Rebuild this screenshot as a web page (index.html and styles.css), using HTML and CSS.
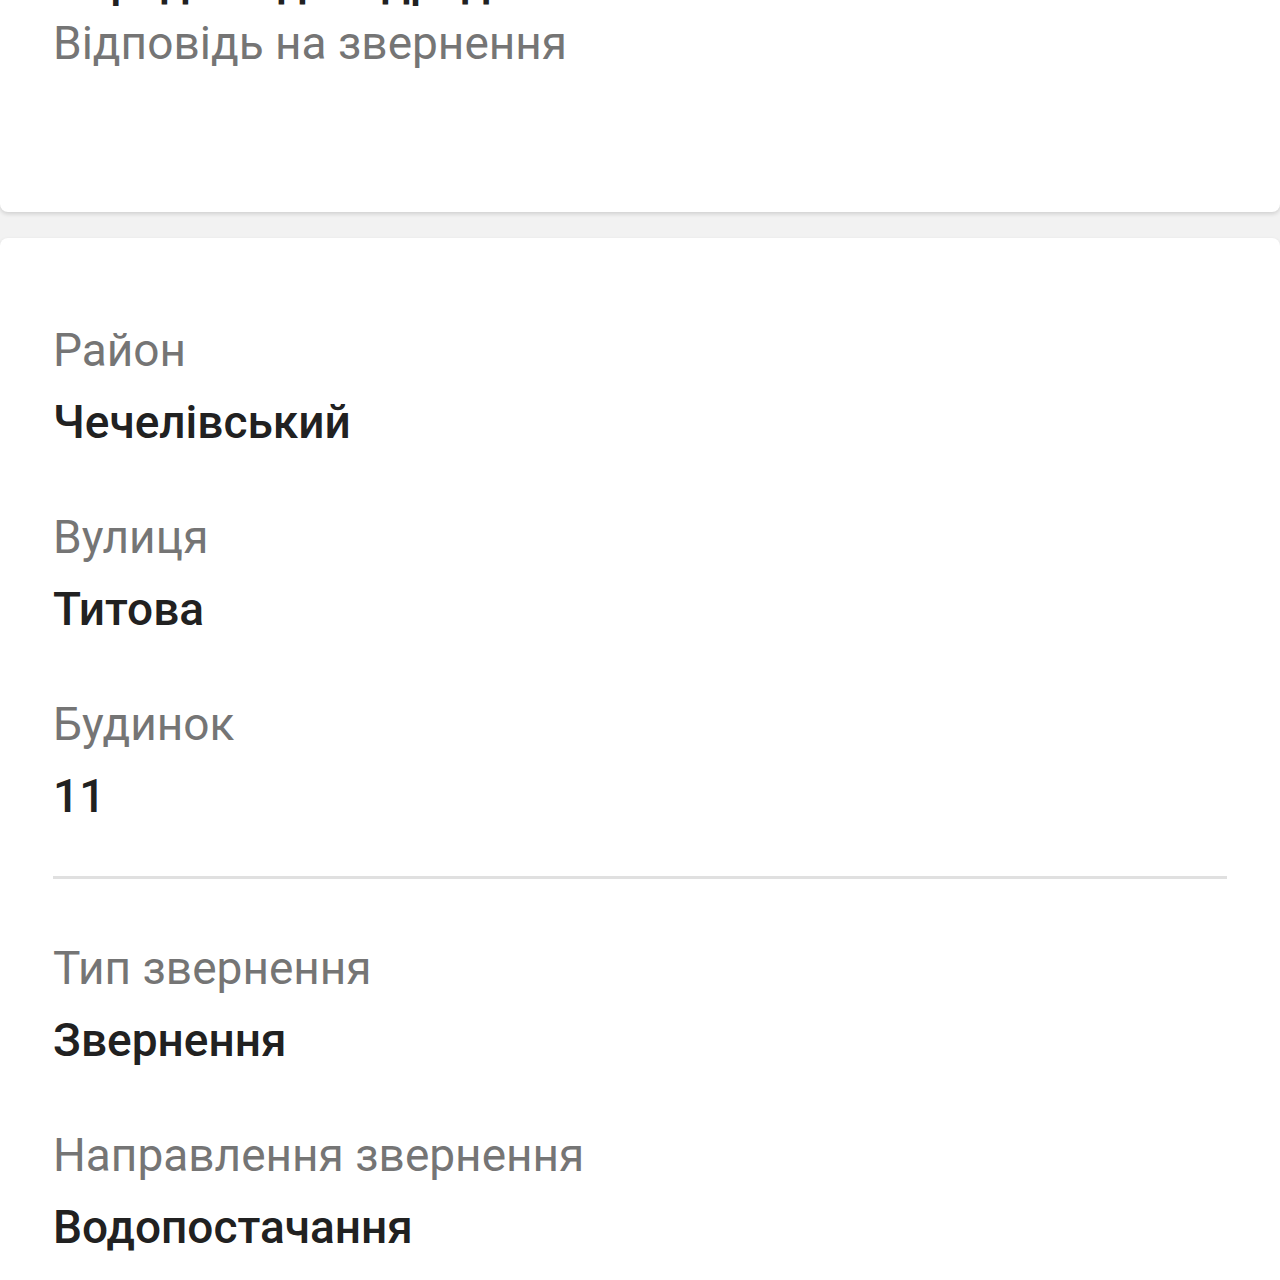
FILE: index.html
```html
<!DOCTYPE html>
<html lang="uk">
<head>
    <meta charset="UTF-8">
    <meta name="viewport" content="width=device-width, initial-scale=1.0">
    <title>Звернення</title>
    <link rel="stylesheet" href="styles.css">
</head>
<body>
    <div class="card card-head">
        <div class="head-title">Передано до підрядника</div>
        <div class="head-sub">Відповідь на звернення</div>
    </div>

    <div class="card card-info">
        <div class="field">
            <div class="field-label">Район</div>
            <div class="field-value">Чечелівський</div>
        </div>
        <div class="field">
            <div class="field-label">Вулиця</div>
            <div class="field-value">Титова</div>
        </div>
        <div class="field">
            <div class="field-label">Будинок</div>
            <div class="field-value">11</div>
        </div>

        <div class="divider"></div>

        <div class="field">
            <div class="field-label">Тип звернення</div>
            <div class="field-value">Звернення</div>
        </div>
        <div class="field">
            <div class="field-label">Направлення звернення</div>
            <div class="field-value">Водопостачання</div>
        </div>
    </div>
</body>
</html>
```

FILE: styles.css
```css
* {
    box-sizing: border-box;
    margin: 0;
    padding: 0;
}

body {
    font-family: Roboto, 'Noto Sans', sans-serif;
    background: #f2f2f2;
    color: #212121;
    height: 1280px;
    overflow: hidden;
}

.card {
    background: #fff;
    border-radius: 8px;
    box-shadow: 0 2px 4px rgba(0, 0, 0, 0.14);
    padding: 0 53px;
}

.card-head {
    margin-top: -46px;
    padding-bottom: 140px;
    border-radius: 0 0 8px 8px;
}

.head-title {
    font-size: 46px;
    font-weight: 500;
    line-height: 54px;
    white-space: nowrap;
}

.head-sub {
    font-size: 46px;
    line-height: 58px;
    margin-top: 6px;
    color: #757575;
}

.card-info {
    margin-top: 26px;
    padding-top: 88px;
    padding-bottom: 40px;
}

.field {
    margin-bottom: 67px;
}

.field:last-child {
    margin-bottom: 0;
}

.field-label {
    font-size: 46px;
    line-height: 48px;
    color: #757575;
    margin-bottom: 24px;
}

.field-value {
    font-size: 46px;
    font-weight: 500;
    line-height: 48px;
    color: #212121;
}

.divider {
    height: 3px;
    background: #e0e0e0;
    margin: -11px 0 65px;
}
```
